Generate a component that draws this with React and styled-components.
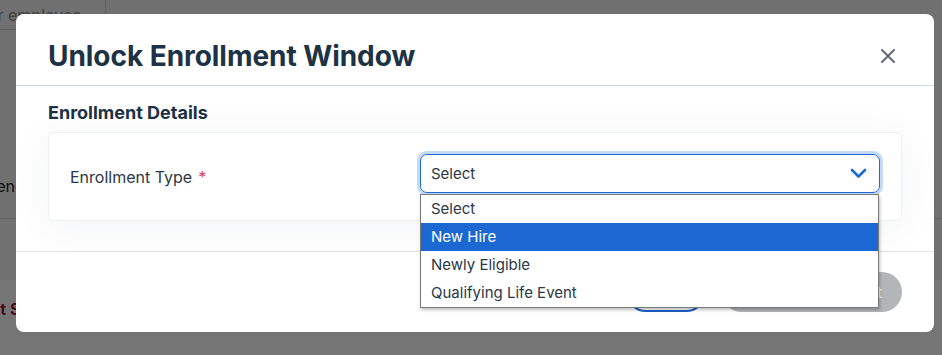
import React from "react";
import styled, { createGlobalStyle } from "styled-components";

const Global = createGlobalStyle`
  html, body { margin: 0; padding: 0; }
  body { font-family: Inter, "Noto Sans", sans-serif; width: 942px; height: 355px; overflow: hidden; }
`;

const Page = styled.div`
  position: relative;
  width: 942px;
  height: 355px;
  background: #ffffff;
  display: flex;
  flex-direction: column;
`;

const TopBand = styled.div`
  height: 218px;
  background: #f3f4f6;
  border-bottom: 1px solid #cfd3d8;
  display: flex;
  flex-direction: column;
`;

const SearchRow = styled.div`
  display: flex;
  height: 30px;
`;

const SearchInput = styled.div`
  width: 105px;
  border-right: 1px solid #c9ced6;
  border-bottom: 1px solid #c9ced6;
  font-size: 16px;
  color: #8a8d92;
  line-height: 30px;
  white-space: nowrap;
  overflow: hidden;
  text-indent: -36px;
`;

const BgText = styled.div`
  margin-top: 146px;
  font-size: 16px;
  color: #222;
  text-indent: -14px;
  white-space: nowrap;
`;

const MidBand = styled.div`
  height: 61px;
  background: #f6f7f8;
`;

const LowBand = styled.div`
  flex: 1;
  background: #ffffff;
  padding-top: 19px;
`;

const RedText = styled.div`
  font-size: 16px;
  font-weight: 700;
  color: #a4163c;
  text-indent: -27px;
  white-space: nowrap;
`;

const Overlay = styled.div`
  position: absolute;
  inset: 0;
  background: rgba(0, 0, 0, 0.54);
  display: flex;
  align-items: flex-start;
  padding: 14px 0 0 16px;
`;

const Modal = styled.div`
  width: 918px;
  height: 318px;
  background: #fff;
  border-radius: 8px;
  display: flex;
  flex-direction: column;
  position: relative;
`;

const Header = styled.div`
  height: 72px;
  border-bottom: 1px solid #c8dae7;
  display: flex;
  align-items: center;
  justify-content: space-between;
  padding: 0 32px;
  box-sizing: border-box;
`;

const Title = styled.h2`
  margin: 0;
  font-size: 28px;
  font-weight: 700;
  color: #1d3245;
  letter-spacing: -0.05px;
  padding-top: 12px;
`;

const CloseBtn = styled.button`
  border: none;
  background: none;
  padding: 0;
  width: 16px;
  height: 16px;
  margin-right: 6px;
  margin-top: 13px;
  display: flex;
  cursor: pointer;
`;

const Body = styled.div`
  height: 166px;
  box-sizing: border-box;
  padding: 17px 32px 30px;
  border-bottom: 1px solid #e1e4e7;
  display: flex;
  flex-direction: column;
  gap: 9px;
`;

const SectionTitle = styled.h3`
  margin: 0;
  font-size: 18px;
  font-weight: 700;
  color: #1d3245;
  line-height: 20px;
`;

const Card = styled.div`
  height: 89px;
  box-sizing: border-box;
  background: #fff;
  border: 1px solid #eef0f3;
  border-radius: 4px;
  box-shadow: 0 6px 40px rgba(40, 50, 80, 0.06);
  display: grid;
  grid-template-columns: 350px 1fr;
  align-items: center;
  padding: 0 21px 6px 21px;
`;

const Label = styled.label`
  font-size: 16px;
  color: #2b3845;
  padding-top: 6px;
`;

const Req = styled.span`
  color: #d6415c;
  margin-left: 6px;
`;

const SelectWrap = styled.div`
  position: relative;
`;

const SelectBox = styled.div`
  height: 39px;
  box-sizing: border-box;
  border: 1px solid #1d69d8;
  border-radius: 7px;
  box-shadow: 0 0 0 3px #c4d9f6;
  display: flex;
  align-items: center;
  justify-content: space-between;
  padding: 0 12px 0 10px;
  font-size: 15px;
  color: #2b3845;
`;

const Options = styled.ul`
  position: absolute;
  left: 0;
  top: 40px;
  width: 459px;
  box-sizing: border-box;
  margin: 0;
  padding: 0;
  list-style: none;
  background: #fff;
  border: 1px solid #7a7a7a;
  box-shadow: 1px 2px 3px rgba(0, 0, 0, 0.25);
  z-index: 5;
`;

const Option = styled.li`
  height: 28px;
  line-height: 28px;
  padding-left: 10px;
  font-size: 15px;
  color: ${(p) => (p.$active ? "#ffffff" : "#2b3845")};
  background: ${(p) => (p.$active ? "#1c68d3" : "transparent")};
`;

const Footer = styled.div`
  flex: 1;
  display: flex;
  align-items: center;
  justify-content: flex-end;
  gap: 16px;
  padding: 0 32px 0 32px;
`;

const OutlineBtn = styled.button`
  height: 40px;
  width: 80px;
  border-radius: 20px;
  border: 2px solid #1c5fc9;
  background: #fff;
  color: #1c5fc9;
  font-family: inherit;
  font-size: 15px;
  font-weight: 600;
`;

const DisabledBtn = styled.button`
  height: 40px;
  width: 180px;
  border-radius: 20px;
  border: none;
  background: #b3b6b8;
  color: #eceded;
  font-family: inherit;
  font-size: 15px;
  font-weight: 600;
  text-align: right;
  padding-right: 20px;
`;

const options = ["Select", "New Hire", "Newly Eligible", "Qualifying Life Event"];

export default function App() {
  return (
    <>
      <Global />
      <Page>
        <TopBand>
          <SearchRow>
            <SearchInput>Enter employee</SearchInput>
          </SearchRow>
          <BgText>Pend</BgText>
        </TopBand>
        <MidBand />
        <LowBand>
          <RedText>Last Saved</RedText>
        </LowBand>
        <Overlay>
          <Modal>
            <Header>
              <Title>Unlock Enrollment Window</Title>
              <CloseBtn aria-label="Close">
                <svg width="16" height="16" viewBox="0 0 16 16">
                  <path d="M2 2 L14 14 M14 2 L2 14" stroke="#5e6a75" strokeWidth="2" strokeLinecap="round" />
                </svg>
              </CloseBtn>
            </Header>
            <Body>
              <SectionTitle>Enrollment Details</SectionTitle>
              <Card>
                <Label>
                  Enrollment Type<Req>*</Req>
                </Label>
                <SelectWrap>
                  <SelectBox>
                    <span>Select</span>
                    <svg width="17" height="11" viewBox="0 0 17 11">
                      <polyline points="2,2 8.5,8.5 15,2" fill="none" stroke="#1d69d8" strokeWidth="2.6" strokeLinecap="round" strokeLinejoin="round" />
                    </svg>
                  </SelectBox>
                  <Options>
                    {options.map((o) => (
                      <Option key={o} $active={o === "New Hire"}>
                        {o}
                      </Option>
                    ))}
                  </Options>
                </SelectWrap>
              </Card>
            </Body>
            <Footer>
              <OutlineBtn>Cancel</OutlineBtn>
              <DisabledBtn>Unlock Enrollment</DisabledBtn>
            </Footer>
          </Modal>
        </Overlay>
      </Page>
    </>
  );
}
